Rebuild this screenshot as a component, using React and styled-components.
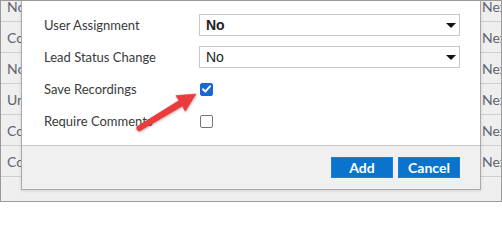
import React from 'react';
import styled, { createGlobalStyle } from 'styled-components';

const GlobalStyle = createGlobalStyle`
  body {
    margin: 0;
    background: #fff;
  }
`;

const leftCells = ['No', 'Co', 'No', 'Un', 'Co', 'Co', ''];

const fields = [
  { label: 'User Assignment', type: 'select', value: 'No', bold: true },
  { label: 'Lead Status Change', type: 'select', value: 'No' },
  { label: 'Save Recordings', type: 'check', checked: true },
  { label: 'Require Comments', type: 'check', checked: false },
];

export default function App() {
  return (
    <>
      <GlobalStyle />
      <Frame>
        <Grid>
          {leftCells.map((text, i) => (
            <Row key={i}>
              <Cell>{text}</Cell>
              <Spacer />
              <Cell $right>{text ? 'Next' : ''}</Cell>
            </Row>
          ))}
        </Grid>

        <Modal>
          <Body>
            {fields.map((f) => (
              <FieldRow key={f.label}>
                <Label>{f.label}</Label>
                {f.type === 'select' ? (
                  <Select $bold={f.bold}>
                    {f.value}
                    <Caret />
                  </Select>
                ) : (
                  <Check $checked={f.checked}>
                    {f.checked && (
                      <svg width="9" height="8" viewBox="0 0 9 8">
                        <path d="M1 4.2 L3.4 6.5 L8 1.3" fill="none" stroke="#fff" strokeWidth="1.9" strokeLinecap="round" strokeLinejoin="round" />
                      </svg>
                    )}
                  </Check>
                )}
              </FieldRow>
            ))}
          </Body>
          <Footer>
            <Button>Add</Button>
            <Button>Cancel</Button>
          </Footer>
        </Modal>

        <Arrow width="502" height="202" viewBox="0 0 502 202">
          <defs>
            <filter id="sh" x="-20%" y="-20%" width="140%" height="140%">
              <feDropShadow dx="0.5" dy="1" stdDeviation="1" floodColor="#000" floodOpacity="0.3" />
            </filter>
          </defs>
          <path
            d="M139.3 131.2 L182.4 106 L185.3 111.2 L196 94 L175.9 95.6 L178.9 100.6 L136.7 126.8 Q136 130.5 139.3 131.2 Z"
            fill="#ea3a3c"
            stroke="#ea3a3c"
            strokeWidth="0.6"
            strokeLinejoin="round"
            filter="url(#sh)"
          />
        </Arrow>
      </Frame>
    </>
  );
}

// CSS
const Frame = styled.div`
  position: relative;
  width: 502px;
  height: 202px;
  box-sizing: border-box;
  border: 1px solid #9a9a9a;
  overflow: hidden;
  background: #f0f0f0;
`;

const Grid = styled.div`
  display: flex;
  flex-direction: column;
  margin-top: -10px;
`;

const Row = styled.div`
  display: flex;
  height: 31px;
  border-bottom: 1px solid #cfcfcf;
  box-sizing: border-box;
  background: #efefef;
`;

const Cell = styled.div`
  width: ${(p) => (p.$right ? '20px' : '60px')};
  padding-left: ${(p) => (p.$right ? '1px' : '6px')};
  box-sizing: border-box;
  display: flex;
  align-items: center;
  font-family: Lato, "Open Sans", sans-serif;
  font-size: 14px;
  color: #5d6470;
  overflow: hidden;
  white-space: nowrap;
`;

const Spacer = styled.div`
  flex: 1;
`;

const Modal = styled.div`
  position: absolute;
  left: 20px;
  top: -2px;
  width: 460px;
  height: 191px;
  box-sizing: border-box;
  border: 1px solid #aaaaaa;
  background: #fff;
  display: flex;
  flex-direction: column;
  box-shadow: 0 1px 3px rgba(0, 0, 0, 0.12);
`;

const Body = styled.div`
  flex: 1;
  padding: 9px 20px 0 22px;
  display: flex;
  flex-direction: column;
`;

const FieldRow = styled.div`
  display: grid;
  grid-template-columns: 155px 1fr;
  align-items: center;
  height: 32px;
`;

const Label = styled.div`
  font-family: Lato, "Open Sans", sans-serif;
  font-size: 13px;
  color: #3a3a3a;
`;

const Select = styled.div`
  position: relative;
  height: 22px;
  box-sizing: border-box;
  border: 1px solid #c8c8c8;
  padding-left: 6px;
  display: flex;
  align-items: center;
  font-family: "Liberation Sans", Arial, sans-serif;
  font-size: 14px;
  font-weight: ${(p) => (p.$bold ? 700 : 400)};
  color: #222;
`;

const Caret = styled.span`
  position: absolute;
  right: 3px;
  top: 8px;
  width: 0;
  height: 0;
  border-left: 5px solid transparent;
  border-right: 5px solid transparent;
  border-top: 5px solid #111;
`;

const Check = styled.span`
  width: 13px;
  height: 13px;
  box-sizing: border-box;
  border-radius: 2px;
  display: flex;
  align-items: center;
  justify-content: center;
  margin-left: 1px;
  background: ${(p) => (p.$checked ? '#1769d4' : '#fff')};
  border: 1px solid ${(p) => (p.$checked ? '#1769d4' : '#767676')};
`;

const Footer = styled.div`
  height: 44px;
  box-sizing: border-box;
  border-top: 1px solid #c8c8c8;
  background: #f0f0f0;
  display: flex;
  justify-content: flex-end;
  align-items: center;
  gap: 5px;
  padding: 0 20px 1px 0;
`;

const Button = styled.button`
  width: 62px;
  height: 21px;
  border: 1px solid #1b7fd6;
  background: #0a74cd;
  color: #fff;
  font-family: Lato, "Open Sans", sans-serif;
  font-weight: 700;
  font-size: 14px;
  padding: 0;
  display: flex;
  align-items: center;
  justify-content: center;
`;

const Arrow = styled.svg`
  position: absolute;
  left: -1px;
  top: -1px;
  pointer-events: none;
`;
